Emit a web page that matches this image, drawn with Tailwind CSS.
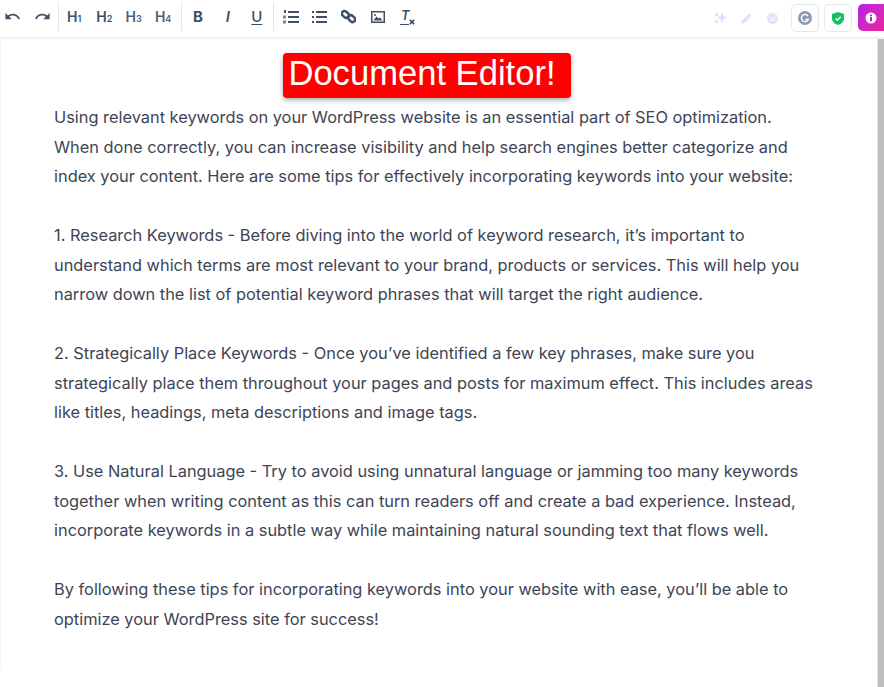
<!DOCTYPE html>
<html lang="en">

<head>
  <meta charset="UTF-8">
  <meta name="viewport" content="width=device-width, initial-scale=1.0">
  <title>Document Editor</title>
  <script src="https://cdn.jsdelivr.net/npm/@tailwindcss/browser@4"></script>
</head>

<body class="bg-white h-[687px] w-[884px] overflow-hidden flex flex-col font-['Inter',sans-serif]">

  <!-- Toolbar -->
  <div class="h-[39px] shrink-0 border-b-2 border-[#f1f3f9] flex items-start text-[#3f4f66]">
    <div class="flex items-center h-[33px] pl-[2px]">
      <button class="w-[20px] h-[20px] flex items-center justify-center">
        <svg width="17" height="17" viewBox="0 0 24 24" fill="currentColor"><path d="M12.5 8c-2.65 0-5.05 1-6.9 2.6L2 7v9h9l-3.62-3.62c1.39-1.16 3.16-1.88 5.12-1.88 3.54 0 6.55 2.31 7.6 5.5l2.37-.78C21.08 11.03 17.15 8 12.5 8z"/></svg>
      </button>
      <button class="w-[20px] h-[20px] ml-[10px] flex items-center justify-center">
        <svg width="17" height="17" viewBox="0 0 24 24" fill="currentColor"><path d="M18.4 10.6C16.55 9 14.15 8 11.5 8c-4.65 0-8.58 3.03-9.96 7.22L3.9 16c1.05-3.19 4.05-5.5 7.6-5.5 1.95 0 3.73.72 5.12 1.88L13 16h9V7l-3.6 3.6z"/></svg>
      </button>
      <div class="w-px h-[29px] bg-[#e5e7eb] ml-[6px] mr-[8px]"></div>
      <div class="flex items-baseline gap-[12.3px] font-semibold text-[14px] leading-none">
        <span class="w-[17px] whitespace-nowrap">H<span class="text-[9px]">1</span></span>
        <span class="w-[17px] whitespace-nowrap">H<span class="text-[9px]">2</span></span>
        <span class="w-[17px] whitespace-nowrap text-[#4f5e75]">H<span class="text-[9px]">3</span></span>
        <span class="w-[17px] whitespace-nowrap text-[#4f5e75]">H<span class="text-[9px]">4</span></span>
      </div>
      <div class="w-px h-[29px] bg-[#e5e7eb] ml-[9px] mr-[9px]"></div>
      <div class="flex items-center text-[15px] leading-none">
        <span class="w-[14px] text-center font-bold">B</span>
        <span class="w-[14px] ml-[16px] text-center italic font-semibold">I</span>
        <span class="w-[14px] ml-[15px] text-center font-medium underline underline-offset-2">U</span>
      </div>
      <div class="w-px h-[29px] bg-[#e5e7eb] ml-[9px] mr-[9px]"></div>
      <!-- ordered list -->
      <svg width="16" height="14" viewBox="0 0 16 14" fill="currentColor">
        <rect x="5" y="1" width="11" height="2"/><rect x="5" y="6" width="11" height="2"/><rect x="5" y="11" width="11" height="2"/>
        <rect x="1" y="0" width="2" height="3"/><rect x="0" y="5.5" width="3" height="3" opacity=".7"/><rect x="0" y="10.5" width="3" height="3" opacity=".7"/>
      </svg>
      <!-- bullet list -->
      <svg class="ml-[13px]" width="15" height="12" viewBox="0 0 15 12" fill="currentColor">
        <rect x="0" y="0" width="2" height="2"/><rect x="0" y="5" width="2" height="2"/><rect x="0" y="10" width="2" height="2"/>
        <rect x="4" y="0" width="11" height="2"/><rect x="4" y="5" width="11" height="2"/><rect x="4" y="10" width="11" height="2"/>
      </svg>
      <!-- link -->
      <svg class="ml-[14px]" width="15" height="15" viewBox="0 0 16 16" fill="none" stroke="currentColor" stroke-width="2.6">
        <rect x="0.6" y="3" width="8" height="5.5" rx="2.75" transform="rotate(42 4.6 5.75)"/>
        <rect x="7.4" y="7.5" width="8" height="5.5" rx="2.75" transform="rotate(42 11.4 10.25)"/>
      </svg>
      <!-- image -->
      <svg class="ml-[15px]" width="14" height="12" viewBox="0 0 14 12">
        <rect x="0.75" y="0.75" width="12.5" height="10.5" fill="none" stroke="currentColor" stroke-width="1.5"/>
        <path d="M2.5 9.5 L5.5 5.5 L7.5 7.5 L9 6.5 L11.5 9.5 Z" fill="currentColor"/>
        <circle cx="4" cy="4" r="1" fill="currentColor"/>
      </svg>
      <!-- clear format -->
      <span class="relative ml-[15px] w-[15px] h-[16px] block">
        <span class="absolute left-0 top-0 w-[11px] text-center italic font-semibold text-[13px] leading-[13px]">T</span>
        <span class="absolute left-0 bottom-0 w-[9px] h-px bg-[#3f4f66]"></span>
        <svg class="absolute right-0 bottom-0" width="6" height="6" viewBox="0 0 7 7" stroke="currentColor" stroke-width="1.8"><path d="M1 1 L6 6 M6 1 L1 6"/></svg>
      </span>
    </div>

    <div class="ml-auto flex items-start">
      <div class="flex items-center h-[36px] text-[#dfe3fb]">
        <!-- sparkle -->
        <svg width="12" height="12" viewBox="0 0 12 12" fill="currentColor"><path d="M7 0 L8.4 3.8 L12 5.5 L8.4 7.2 L7 12 L5.6 7.2 L2 5.5 L5.6 3.8 Z"/><rect x="0" y="1" width="3" height="3"/><rect x="0" y="8" width="3" height="3"/></svg>
        <!-- pen -->
        <svg class="ml-[14px]" width="11" height="11" viewBox="0 0 11 11" fill="currentColor"><path d="M8 0.5 L10.5 3 L3 10.5 L0.5 10.5 L0.5 8 Z"/></svg>
        <!-- smile -->
        <svg class="ml-[15px]" width="11" height="11" viewBox="0 0 11 11"><circle cx="5.5" cy="5.5" r="5.5" fill="currentColor"/><circle cx="3.8" cy="4.3" r=".8" fill="#fff"/><circle cx="7.2" cy="4.3" r=".8" fill="#fff"/><path d="M3 6.5 Q5.5 9.5 8 6.5" fill="#fff"/></svg>
      </div>
      <div class="ml-[13px] mt-[4px] w-[28px] h-[28px] rounded-[5px] border border-[#e5e8f0] flex items-center justify-center">
        <svg width="14" height="14" viewBox="0 0 14 14"><circle cx="7" cy="7" r="7" fill="#8d9bb5"/><path d="M10 5 A3.6 3.6 0 1 0 10.3 8.5 L7.5 8.5" fill="none" stroke="#fff" stroke-width="1.4"/></svg>
      </div>
      <div class="ml-[5px] mt-[4px] w-[28px] h-[28px] rounded-[5px] border border-[#e5e8f0] flex items-center justify-center">
        <svg width="12" height="13" viewBox="0 0 12 13"><path d="M6 0 L12 2 L12 6.5 C12 10 9 12 6 13 C3 12 0 10 0 6.5 L0 2 Z" fill="#16c060"/><path d="M3.5 6.5 L5.3 8.3 L8.7 4.8" fill="none" stroke="#fff" stroke-width="1.4"/></svg>
      </div>
      <div class="ml-[6px] mt-[4px] w-[26px] h-[27px] rounded-l-[5px] bg-gradient-to-br from-[#b917ea] to-[#e7209a] flex items-center justify-center">
        <svg width="12" height="12" viewBox="0 0 12 12"><circle cx="6" cy="6" r="5.5" fill="#fff"/><rect x="5" y="5" width="2" height="4.2" fill="#c91cc8"/><rect x="5" y="2.6" width="2" height="1.6" fill="#c91cc8"/></svg>
      </div>
    </div>
  </div>

  <!-- Editor area -->
  <div class="flex flex-1 min-h-0">
    <div class="flex-1 min-w-0 h-[629px] border-l border-[#f4f4f6] pl-[53px] pr-[50px]">
      <div class="flex justify-center pt-[14px] pr-[27px]">
        <h1 class="bg-[#ff0000] text-white font-['Liberation_Sans',sans-serif] text-[34.6px] leading-[40px] h-[45px] pl-[5px] pr-[15px] rounded-[4px] shadow-[0_2px_5px_rgba(0,0,0,0.35)] whitespace-nowrap">Document Editor!</h1>
      </div>
      <div class="mt-[5px] text-[16.36px] leading-[29.5px] text-[#3d4455]">
        <p class="whitespace-nowrap">Using relevant keywords on your WordPress website is an essential part of SEO optimization.</p>
        <p class="whitespace-nowrap">When done correctly, you can increase visibility and help search engines better categorize and</p>
        <p class="whitespace-nowrap">index your content. Here are some tips for effectively incorporating keywords into your website:</p>
        <p class="h-[29.5px]"></p>
        <p class="whitespace-nowrap">1. Research Keywords - Before diving into the world of keyword research, it’s important to</p>
        <p class="whitespace-nowrap">understand which terms are most relevant to your brand, products or services. This will help you</p>
        <p class="whitespace-nowrap">narrow down the list of potential keyword phrases that will target the right audience.</p>
        <p class="h-[29.5px]"></p>
        <p class="whitespace-nowrap">2. Strategically Place Keywords - Once you’ve identified a few key phrases, make sure you</p>
        <p class="whitespace-nowrap">strategically place them throughout your pages and posts for maximum effect. This includes areas</p>
        <p class="whitespace-nowrap">like titles, headings, meta descriptions and image tags.</p>
        <p class="h-[29.5px]"></p>
        <p class="whitespace-nowrap">3. Use Natural Language - Try to avoid using unnatural language or jamming too many keywords</p>
        <p class="whitespace-nowrap">together when writing content as this can turn readers off and create a bad experience. Instead,</p>
        <p class="whitespace-nowrap">incorporate keywords in a subtle way while maintaining natural sounding text that flows well.</p>
        <p class="h-[29.5px]"></p>
        <p class="whitespace-nowrap">By following these tips for incorporating keywords into your website with ease, you’ll be able to</p>
        <p class="whitespace-nowrap">optimize your WordPress site for success!</p>
      </div>
    </div>
    <!-- Scrollbar -->
    <div class="w-[7px] shrink-0 bg-[#bdbdbd] border-l border-[#e8e8e8]"></div>
  </div>

</body>

</html>
